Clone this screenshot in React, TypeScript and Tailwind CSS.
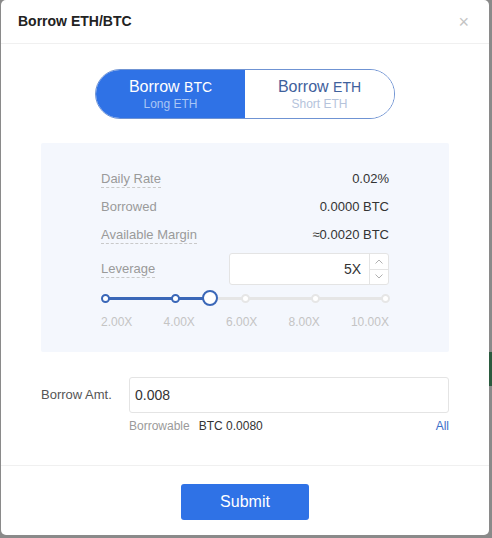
import React, { useState } from 'react';

const marks = ['2.00X', '4.00X', '6.00X', '8.00X', '10.00X'];

const InfoRow: React.FC<{ label: string; value: string; dashed?: boolean }> = ({ label, value, dashed }) => (
    <div className="flex items-center justify-between h-[28px]">
        <span className={`text-[13px] text-[#9a9a9a] ${dashed ? 'border-b border-dashed border-[#c9c9c9] leading-[16px]' : ''}`}>
            {label}
        </span>
        <span className="text-[13px] text-[#333]">{value}</span>
    </div>
);

const App: React.FC = () => {
    const [side, setSide] = useState<'btc' | 'eth'>('btc');
    const [amount, setAmount] = useState('0.008');

    return (
        <div className="w-[492px] h-[538px] bg-[#8a8a8a] flex font-['Liberation_Sans',Arial,sans-serif] relative overflow-hidden">
            <div className="absolute right-0 top-[352px] w-[3px] h-[34px] bg-[#2b5a3e]" />
            <div className="ml-px w-[488px] h-[535px] bg-white rounded-[5px] flex flex-col relative z-10">
                {/* header */}
                <div className="h-[44px] flex items-center justify-between pl-[17px] pr-[20px] border-b border-[#f0f0f0]">
                    <span className="text-[14px] font-bold text-[#222]">Borrow ETH/BTC</span>
                    <span className="text-[18px] text-[#c4c4c4] leading-none">×</span>
                </div>

                {/* body */}
                <div className="flex-1 px-[40px] pt-[25px]">
                    <div className="ml-[54px] w-[300px] h-[50px] flex rounded-full border border-[#6f93d3] overflow-hidden">
                        <button
                            onClick={() => setSide('btc')}
                            className={`flex-1 flex flex-col items-center justify-center ${side === 'btc' ? 'bg-[#2f72e6]' : 'bg-white'}`}
                        >
                            <span className={`text-[16px] leading-[19px] ${side === 'btc' ? 'text-white' : 'text-[#3f619c]'}`}>
                                Borrow <span className="text-[14px]">BTC</span>
                            </span>
                            <span className={`text-[12px] leading-[15px] ${side === 'btc' ? 'text-[#a9c6f5]' : 'text-[#b5c3db]'}`}>Long ETH</span>
                        </button>
                        <button
                            onClick={() => setSide('eth')}
                            className={`flex-1 flex flex-col items-center justify-center ${side === 'eth' ? 'bg-[#2f72e6]' : 'bg-white'}`}
                        >
                            <span className={`text-[16px] leading-[19px] ${side === 'eth' ? 'text-white' : 'text-[#3f619c]'}`}>
                                Borrow <span className="text-[14px]">ETH</span>
                            </span>
                            <span className={`text-[12px] leading-[15px] ${side === 'eth' ? 'text-[#a9c6f5]' : 'text-[#b5c3db]'}`}>Short ETH</span>
                        </button>
                    </div>

                    <div className="mt-[24px] h-[209px] bg-[#f4f7fd] rounded-[2px] pl-[60px] pr-[60px] pt-[22px]">
                        <InfoRow label="Daily Rate" value="0.02%" dashed />
                        <InfoRow label="Borrowed" value="0.0000 BTC" />
                        <InfoRow label="Available Margin" value="≈0.0020 BTC" dashed />

                        <div className="flex items-center justify-between mt-[4px] h-[32px]">
                            <span className="text-[13px] text-[#9a9a9a] border-b border-dashed border-[#c9c9c9] leading-[16px]">Leverage</span>
                            <div className="w-[160px] h-[32px] bg-white border border-[#e4e4e4] rounded-[3px] flex">
                                <div className="flex-1 flex items-center justify-end pr-[8px] text-[14px] text-[#333]">5X</div>
                                <div className="w-[19px] border-l border-[#e4e4e4] flex flex-col">
                                    <div className="flex-1 flex items-center justify-center border-b border-[#e4e4e4]">
                                        <svg width="8" height="5" viewBox="0 0 8 5"><path d="M0.5 4.5 L4 1 L7.5 4.5" fill="none" stroke="#b0b0b0" strokeWidth="1" /></svg>
                                    </div>
                                    <div className="flex-1 flex items-center justify-center">
                                        <svg width="8" height="5" viewBox="0 0 8 5"><path d="M0.5 0.5 L4 4 L7.5 0.5" fill="none" stroke="#b0b0b0" strokeWidth="1" /></svg>
                                    </div>
                                </div>
                            </div>
                        </div>

                        {/* slider */}
                        <div className="relative h-[14px] mt-[6px] mx-[4px]">
                            <div className="absolute left-0 right-0 top-[6px] h-[3px] bg-[#e6e6e6] rounded" />
                            <div className="absolute left-0 top-[6px] h-[3px] w-[105px] bg-[#3a67b8] rounded" />
                            {[0, 25, 50, 75, 100].map((p, i) => (
                                <div
                                    key={i}
                                    className={`absolute top-[3px] w-[9px] h-[9px] rounded-full bg-white border-2 -ml-[4.5px] ${p <= 25 ? 'border-[#3a67b8]' : 'border-[#e6e6e6]'}`}
                                    style={{ left: `${p}%` }}
                                />
                            ))}
                            <div className="absolute top-[-1px] left-[105px] -ml-[8px] w-[16px] h-[16px] rounded-full bg-white border-2 border-[#3a67b8]" />
                        </div>
                        <div className="flex justify-between mt-[8px] text-[12px] text-[#c4c4c4]">
                            {marks.map(m => <span key={m}>{m}</span>)}
                        </div>
                    </div>

                    <div className="mt-[25px] flex items-center">
                        <span className="w-[88px] text-[13px] text-[#555]">Borrow Amt.</span>
                        <input
                            value={amount}
                            onChange={e => setAmount(e.target.value)}
                            className="w-[320px] h-[36px] border border-[#e4e4e4] rounded-[3px] px-[5px] text-[14px] text-[#333] outline-none"
                        />
                    </div>
                    <div className="ml-[88px] mt-[4px] flex items-center justify-between text-[12px]">
                        <span>
                            <span className="text-[#9a9a9a]">Borrowable</span>
                            <span className="text-[#333] ml-[9px]">BTC 0.0080</span>
                        </span>
                        <span className="text-[#3a6fc9]">All</span>
                    </div>
                </div>

                {/* footer */}
                <div className="h-[70px] border-t border-[#f0f0f0] flex items-center justify-center">
                    <button className="w-[128px] h-[36px] mt-[2px] bg-[#2f72e6] rounded-[3px] text-white text-[16px]">Submit</button>
                </div>
            </div>
        </div>
    );
};

export default App;
